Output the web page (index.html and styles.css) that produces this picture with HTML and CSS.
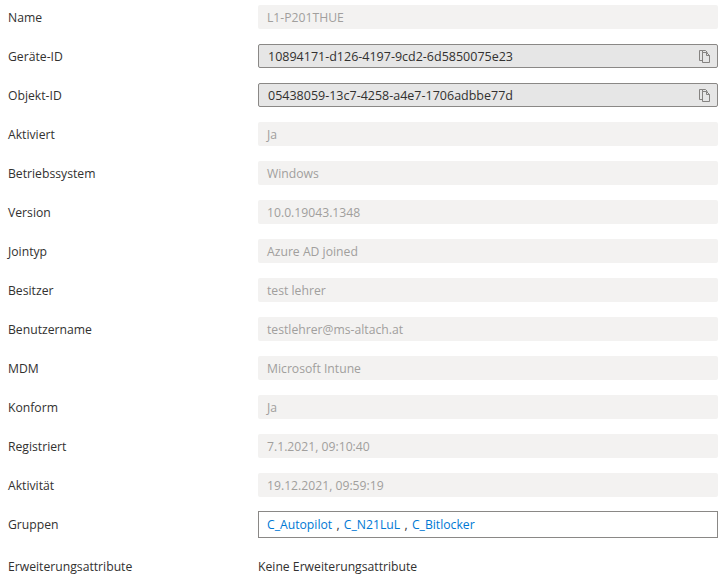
FILE: index.html
```html
<!DOCTYPE html>
<html lang="de">
<head>
    <meta charset="UTF-8">
    <title>Geräteeigenschaften</title>
    <link rel="stylesheet" href="styles.css">
</head>
<body>
    <section class="props">
        <div class="row"><span class="label">Name</span><div class="field">L1-P201THUE</div></div>
        <div class="row">
            <span class="label">Geräte-ID</span>
            <div class="field copy">
                <span>10894171-d126-4197-9cd2-6d5850075e23</span>
                <svg class="copy-icon" viewBox="0 0 12 13" width="12" height="13"><path d="M3.5 2.5V.5h3l2 2M3.5 10.5H.5v-10h3M3.5 2.5h4l3 3v7h-7zM7.5 2.5v3h3" fill="none" stroke="#797775" stroke-width=".9"/></svg>
            </div>
        </div>
        <div class="row">
            <span class="label">Objekt-ID</span>
            <div class="field copy">
                <span>05438059-13c7-4258-a4e7-1706adbbe77d</span>
                <svg class="copy-icon" viewBox="0 0 12 13" width="12" height="13"><path d="M3.5 2.5V.5h3l2 2M3.5 10.5H.5v-10h3M3.5 2.5h4l3 3v7h-7zM7.5 2.5v3h3" fill="none" stroke="#797775" stroke-width=".9"/></svg>
            </div>
        </div>
        <div class="row"><span class="label">Aktiviert</span><div class="field">Ja</div></div>
        <div class="row"><span class="label">Betriebssystem</span><div class="field">Windows</div></div>
        <div class="row"><span class="label">Version</span><div class="field">10.0.19043.1348</div></div>
        <div class="row"><span class="label">Jointyp</span><div class="field">Azure AD joined</div></div>
        <div class="row"><span class="label">Besitzer</span><div class="field">test lehrer</div></div>
        <div class="row"><span class="label">Benutzername</span><div class="field">testlehrer@ms-altach.at</div></div>
        <div class="row"><span class="label">MDM</span><div class="field">Microsoft Intune</div></div>
        <div class="row"><span class="label">Konform</span><div class="field">Ja</div></div>
        <div class="row"><span class="label">Registriert</span><div class="field">7.1.2021, 09:10:40</div></div>
        <div class="row"><span class="label">Aktivität</span><div class="field">19.12.2021, 09:59:19</div></div>
        <div class="row groups-row">
            <span class="label">Gruppen</span>
            <div class="groups"><a href="#">C_Autopilot</a> , <a href="#">C_N21LuL</a> , <a href="#">C_Bitlocker</a></div>
        </div>
        <div class="row last-row"><span class="label">Erweiterungsattribute</span><span class="value">Keine Erweiterungsattribute</span></div>
    </section>
</body>
</html>
```

FILE: styles.css
```css
html {
    overflow: hidden;
}
body {
    font-family: 'Open Sans', sans-serif;
    font-size: 12.2px;
    margin: 0;
    padding: 5px 6px 0 8px;
    background: #fff;
    color: #323130;
}
.props {
    display: flex;
    flex-direction: column;
    gap: 15px;
}
.row {
    display: grid;
    grid-template-columns: 250px 1fr;
    align-items: center;
    height: 24px;
}
.field {
    box-sizing: border-box;
    height: 24px;
    line-height: 25px;
    padding: 0 9px;
    background: #f3f2f1;
    border-radius: 2px;
    color: #a19f9d;
}
.copy {
    display: flex;
    justify-content: space-between;
    align-items: center;
    padding: 0 6px 0 9px;
    background: #e6e6e6;
    border: 1px solid #8a8886;
    color: #323130;
    font-size: 12.5px;
}
.groups-row {
    height: 27px;
    margin-top: -1px;
}
.groups {
    box-sizing: border-box;
    height: 27px;
    line-height: 26px;
    padding: 0 8px;
    border: 1px solid #8a8886;
    word-spacing: 1.1px;
}
.groups a {
    color: #0078d4;
    text-decoration: none;
}
.last-row {
    margin-top: 2px;
    height: 22px;
}
.value {
    color: #323130;
}
```
